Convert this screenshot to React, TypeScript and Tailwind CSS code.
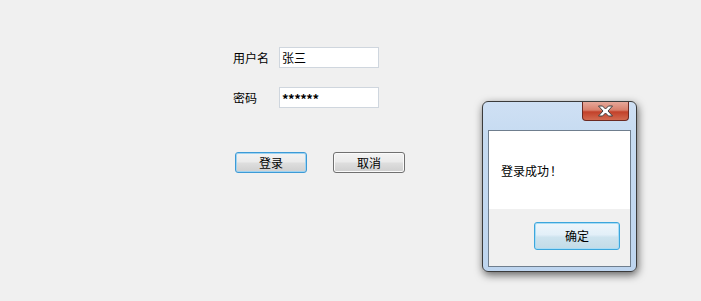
import React from "react";

const font = { fontFamily: '"Noto Sans CJK SC", "Liberation Sans", sans-serif' };

function WinButton({ label, focused }: { label: string; focused?: boolean }) {
  return (
    <div
      className={
        "w-[72px] h-[21px] rounded-[3px] border flex items-center justify-center text-[12px] text-black leading-none bg-[linear-gradient(#f3f3f3_0%,#ebebeb_45%,#dddddd_55%,#cfcfcf_100%)] " +
        (focused ? "border-[#3c9ad6] shadow-[inset_0_0_0_1px_#9fd3f1]" : "border-[#707070] shadow-[inset_0_0_0_1px_#fafafa]")
      }
    >
      {label}
    </div>
  );
}

export default function App() {
  return (
    <div className="relative w-[701px] h-[301px] bg-[#f0f0f0] overflow-hidden" style={font}>
      <div className="flex flex-col pl-[233px] pt-[47px]">
        <div className="flex items-center h-[21px]">
          <span className="w-[46px] text-[12px] text-black">用户名</span>
          <div className="w-[100px] h-[21px] bg-white border border-[#cfd6de] flex items-center pl-[2px] text-[12px] text-black">
            张三
          </div>
        </div>
        <div className="flex items-center h-[21px] mt-[19px]">
          <span className="w-[46px] text-[12px] text-black">密码</span>
          <div className="w-[100px] h-[21px] bg-white border border-[#cfd6de] flex items-center pl-[2px] pt-[2px] text-[13px] font-bold text-black tracking-[-0.5px]">
            ******
          </div>
        </div>
        <div className="flex mt-[44px] ml-[2px] gap-[26px]">
          <WinButton label="登录" focused />
          <WinButton label="取消" />
        </div>
      </div>

      {/* Message box window */}
      <div className="absolute left-[482px] top-[101px] w-[155px] h-[171px] rounded-[6px] border border-[#3b3b3b] bg-[linear-gradient(#cfe0f4_0%,#c6dbf1_20%,#bed5ef_100%)] shadow-[1px_3px_9px_rgba(0,0,0,0.6)] flex flex-col">
        <div className="relative h-[28px] shrink-0">
          <div className="absolute right-[7px] top-0 w-[47px] h-[19px] rounded-b-[4px] border border-[#6b2a22] border-t-0 bg-[linear-gradient(#e6a89a_0%,#d8806c_45%,#c2412a_55%,#d26a50_100%)] flex items-center justify-center">
            <svg width="17" height="12" viewBox="0 0 17 12">
              <path
                d="M1.5 1 L5.5 1 L8.5 4 L11.5 1 L15.5 1 L11 6 L15.5 11 L11.5 11 L8.5 8 L5.5 11 L1.5 11 L6 6 Z"
                fill="#ffffff"
                stroke="#3f3f3f"
                strokeWidth="1"
                strokeLinejoin="round"
              />
            </svg>
          </div>
        </div>
        <div className="mx-[5px] mb-[4px] flex-1 border border-[#6f7e8e] flex flex-col bg-white">
          <div className="h-[78px] flex items-center pl-[12px] pt-[2px] text-[12px] text-black">
            登录成功<span className="ml-[1px]">！</span>
          </div>
          <div className="flex-1 bg-[#f0f0f0] flex justify-end items-start pt-[13px] pr-[10px]">
            <div className="w-[86px] h-[28px] rounded-[3px] border border-[#3ca6dc] shadow-[inset_0_0_0_1px_#a8dcf5] bg-[linear-gradient(#eef6fb_0%,#e2eff8_45%,#cde3ee_55%,#c3dbe7_100%)] flex items-center justify-center text-[12px] text-black">
              确定
            </div>
          </div>
        </div>
      </div>
    </div>
  );
}
